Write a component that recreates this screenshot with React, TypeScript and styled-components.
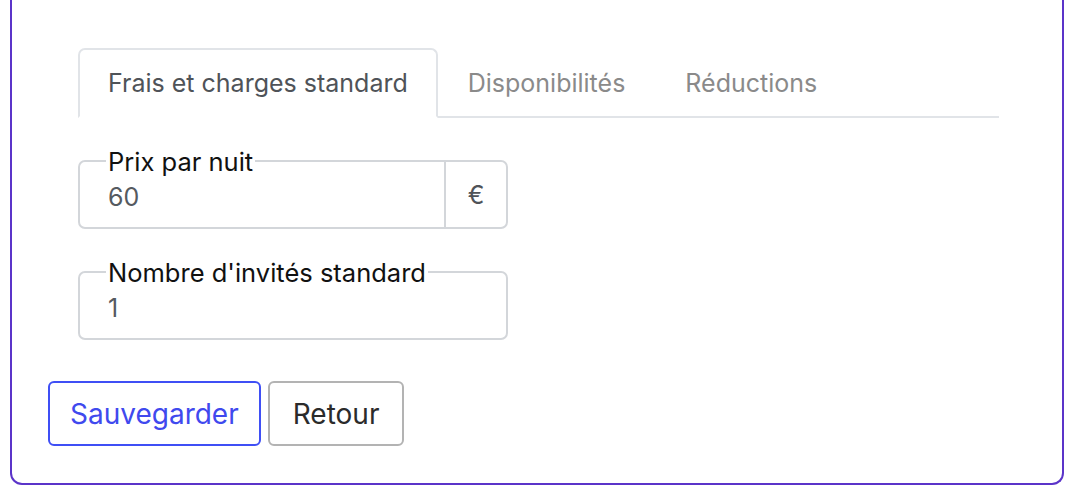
import React, { useState } from "react";
import styled, { createGlobalStyle } from "styled-components";

const GlobalStyle = createGlobalStyle`
  html, body {
    margin: 0;
    padding: 0;
    background: #ffffff;
    font-family: Inter, "Noto Sans", "Liberation Sans", sans-serif;
  }
`;

const Page = styled.div`
  padding: 0 12px 13px 10px;
  height: 498px;
  box-sizing: border-box;
  display: flex;
  flex-direction: column;
`;

const Card = styled.div`
  flex: 1;
  border: 2px solid #5b34c9;
  border-top: none;
  border-radius: 0 0 12px 12px;
  padding: 48px 36px 0 36px;
  display: flex;
  flex-direction: column;
`;

const TabPane = styled.div`
  margin: 0 27px 0 30px;
  display: flex;
  flex-direction: column;
  gap: 42px;
`;

const TabList = styled.div`
  display: flex;
  border-bottom: 2px solid #e1e4e8;
  height: 70px;
  box-sizing: border-box;
`;

const Tab = styled.button<{ $active?: boolean }>`
  font-family: inherit;
  font-size: 25px;
  background: ${(p) => (p.$active ? "#fff" : "transparent")};
  padding: 0 28px;
  height: 70px;
  margin-bottom: -2px;
  border: 2px solid ${(p) => (p.$active ? "#e1e4e8" : "transparent")};
  border-bottom-color: ${(p) => (p.$active ? "#fff" : "transparent")};
  border-radius: 7px 7px 0 0;
  color: ${(p) => (p.$active ? "#4f5358" : "#8a8a8a")};
  cursor: pointer;
`;

const Fields = styled.div`
  display: flex;
  flex-direction: column;
  gap: 42px;
`;

const Group = styled.div`
  width: 430px;
  height: 69px;
  box-sizing: border-box;
  display: flex;
  border: 2px solid #d3d6da;
  border-radius: 7px;
`;

const Field = styled.div`
  position: relative;
  flex: 1;
  min-width: 0;
  display: flex;
`;

const Label = styled.label`
  position: absolute;
  top: -15px;
  left: 26px;
  padding: 0 2px;
  background: #fff;
  font-size: 25.5px;
  line-height: 30px;
  color: #111;
`;

const Input = styled.input`
  flex: 1;
  min-width: 0;
  border: none;
  outline: none;
  background: transparent;
  font-family: inherit;
  font-size: 25px;
  color: #555a60;
  padding: 4px 28px 0 28px;
`;

const Addon = styled.span`
  width: 60px;
  flex-shrink: 0;
  border-left: 2px solid #d3d6da;
  display: flex;
  align-items: center;
  justify-content: center;
  font-size: 25px;
  color: #4f5358;
`;

const Actions = styled.div`
  display: flex;
  gap: 7px;
  margin-top: 41px;
`;

const Button = styled.button<{ $primary?: boolean }>`
  font-family: inherit;
  font-size: 28px;
  height: 65px;
  padding: 0 ${(p) => (p.$primary ? "20px" : "23px")};
  background: #fff;
  border-radius: 6px;
  border: 2px solid ${(p) => (p.$primary ? "#3f4ff5" : "#b3b3b3")};
  color: ${(p) => (p.$primary ? "#4049ee" : "#2b2b2b")};
  cursor: pointer;
`;

const tabs = ["Frais et charges standard", "Disponibilités", "Réductions"];

export default function App() {
  const [active, setActive] = useState(0);
  const [price, setPrice] = useState("60");
  const [guests, setGuests] = useState("1");

  return (
    <>
      <GlobalStyle />
      <Page>
        <Card>
          <TabPane>
            <TabList>
              {tabs.map((t, i) => (
                <Tab key={t} $active={i === active} onClick={() => setActive(i)}>
                  {t}
                </Tab>
              ))}
            </TabList>
            <Fields>
              <Group>
                <Field>
                  <Label htmlFor="price">Prix par nuit</Label>
                  <Input id="price" value={price} onChange={(e) => setPrice(e.target.value)} />
                </Field>
                <Addon>€</Addon>
              </Group>
              <Group>
                <Field>
                  <Label htmlFor="guests">Nombre d'invités standard</Label>
                  <Input id="guests" value={guests} onChange={(e) => setGuests(e.target.value)} />
                </Field>
              </Group>
            </Fields>
          </TabPane>
          <Actions>
            <Button $primary>Sauvegarder</Button>
            <Button>Retour</Button>
          </Actions>
        </Card>
      </Page>
    </>
  );
}
